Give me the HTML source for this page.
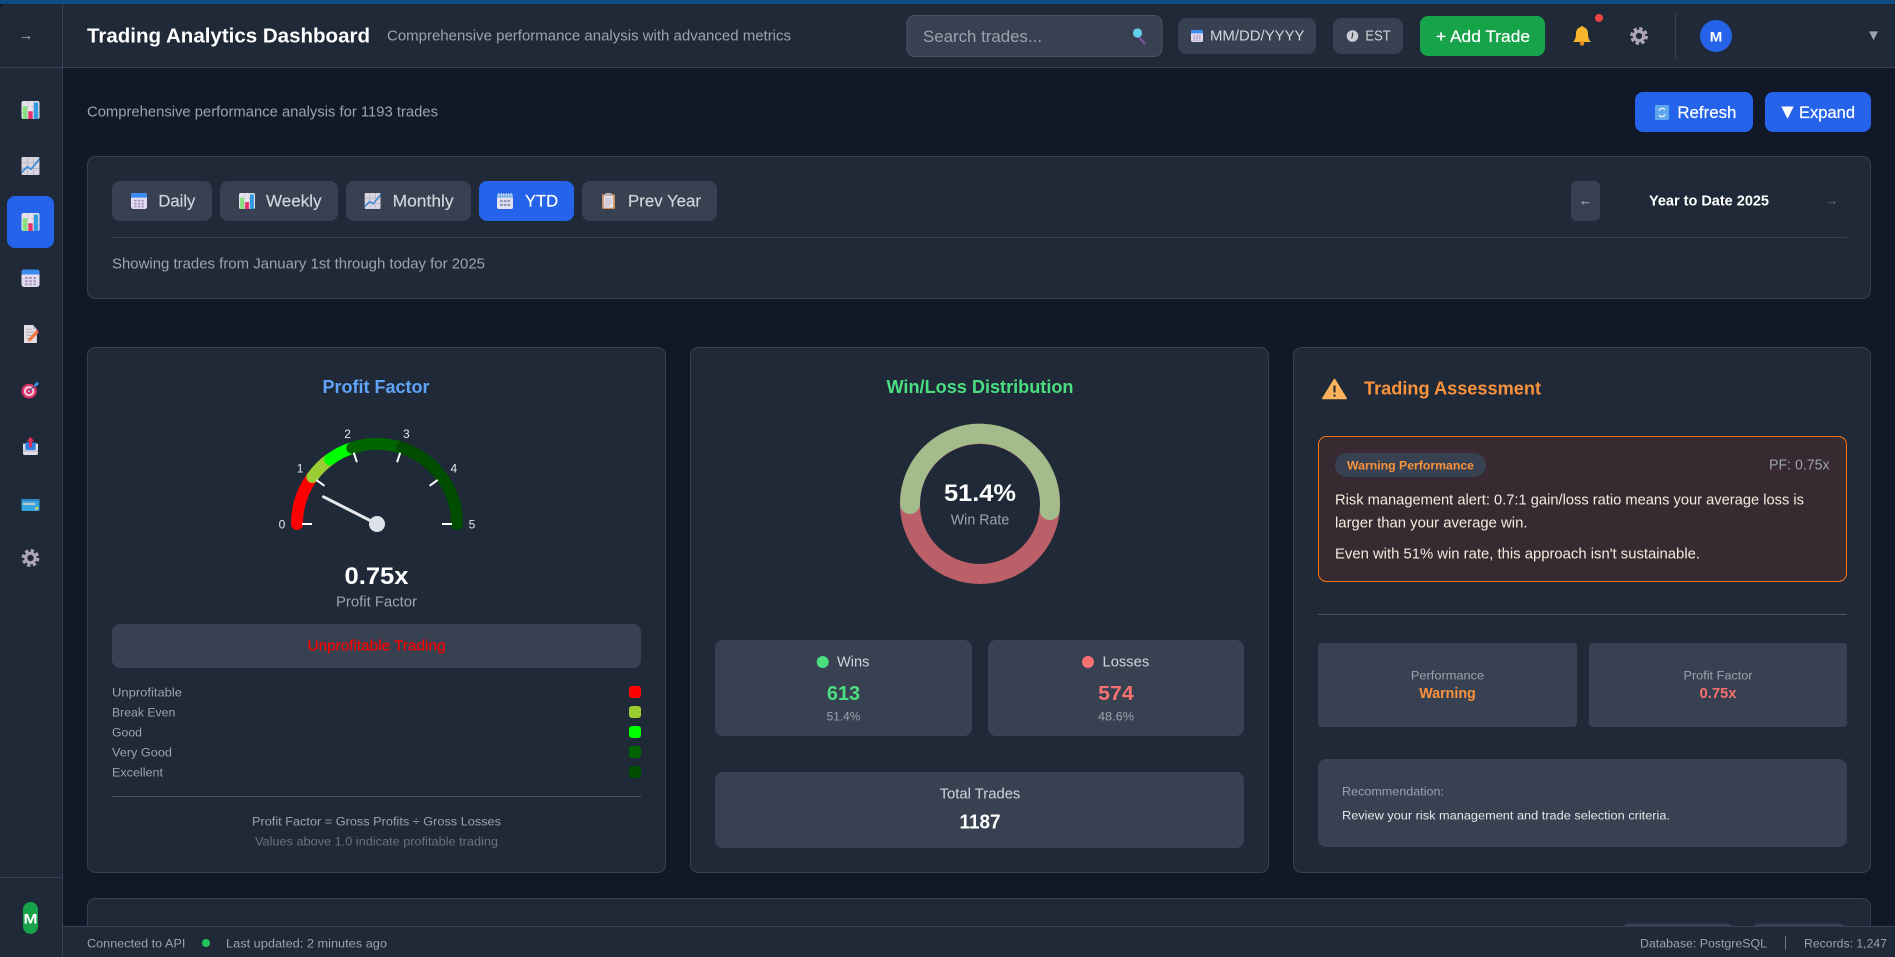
<!DOCTYPE html>
<html lang="en">
<head>
<meta charset="utf-8">
<title>Trading Analytics Dashboard</title>
<style>
html,body{margin:0;padding:0;width:1895px;height:957px;overflow:hidden;background:#111827}
svg{display:block}
text{font-family:"Liberation Sans",sans-serif;dominant-baseline:central;white-space:pre;transform:translateY(.5px)}
.b{font-weight:700}
.m{stroke:currentColor;stroke-width:.18px}
.w{fill:#fff;color:#fff}
.g3{fill:#d1d5db;color:#d1d5db}
.g4{fill:#9ca3af;color:#9ca3af}
.g5{fill:#6b7280}
.mid{text-anchor:middle}
.s12{font-size:12.3px}
.s14{font-size:14.4px}
.s16{font-size:16.4px}
.s18{font-size:18.4px}
.card{fill:#1f2937;stroke:#374151;stroke-width:1}
.btn{fill:#374151}
.blue{fill:#2563eb}
</style>
</head>
<body>
<svg xmlns="http://www.w3.org/2000/svg" width="1895" height="957" viewBox="0 0 1895 957">
<defs>
<symbol id="chart" viewBox="1 1 14 14" preserveAspectRatio="none"><rect x="1" y="1" width="14" height="14" rx="1.5" fill="#e6e2ea"/><path d="M1 5.5h14M1 10h14M5.6 1v14M10.4 1v14" stroke="#c9c4d2" stroke-width=".5"/><rect x="2" y="5" width="3.4" height="10" fill="#86e07e"/><rect x="6.3" y="9" width="3.4" height="6" fill="#e8326b"/><rect x="10.6" y="2.2" width="3.4" height="12.8" fill="#2f9ae0"/></symbol>
<symbol id="line" viewBox="1 1 14 14" preserveAspectRatio="none"><rect x="1" y="1" width="14" height="14" rx="1" fill="#d9d4df"/><path d="M1 5.5h14M1 10h14M5.6 1v14M10.4 1v14" stroke="#b8b2c2" stroke-width=".6"/><path d="M1 13 5.5 8.5 8.5 10.5 15 2.5" fill="none" stroke="#3f8ed8" stroke-width="1.4"/></symbol>
<symbol id="cal" viewBox="1.5 1 13 14" preserveAspectRatio="none"><rect x="1.5" y="1" width="13" height="14" rx="2" fill="#e4ddf0"/><path d="M1.5 5V3a2 2 0 0 1 2-2h9a2 2 0 0 1 2 2v2z" fill="#3b8cf0"/><path d="M4 7h2v1.6H4zM7 7h2v1.6H7zM10 7h2v1.6h-2zM4 9.6h2v1.6H4zM7 9.6h2v1.6H7zM10 9.6h2v1.6h-2zM4 12.2h2v1.4H4zM7 12.2h2v1.4H7zM10 12.2h2v1.4h-2z" fill="#a497bd"/></symbol>
<symbol id="cal2" viewBox="1.5 1 13 14" preserveAspectRatio="none"><rect x="1.5" y="2" width="13" height="13" rx="1.5" fill="#e4e2f0"/><rect x="1.5" y="2" width="13" height="3" fill="#6fa8e8"/><path d="M3 1v3M5 1v3M7 1v3M9 1v3M11 1v3M13 1v3" stroke="#dfe3ee" stroke-width=".8"/><path d="M4 7h2.2v2H4zM7 7h2.2v2H7zM10 7h2.2v2H10zM4 10.4h2.2v2H4zM7 10.4h2.2v2H7zM10 10.4h2.2v2H10z" fill="#8f97b8"/></symbol>
<symbol id="memo" viewBox="2 .5 14 15" preserveAspectRatio="none"><path d="M2 .5h8.5L14 4v11.5H2z" fill="#e4dfe6"/><path d="M10.5.5V4H14z" fill="#bfb8c6"/><path d="M4 4h5M4 6.5h7M4 9h5M4 11.5h3" stroke="#a9a2b2" stroke-width=".7"/><path d="M5.5 14.5l1-3 7-6.5 2 2-7 6.5z" fill="#f0793a"/><path d="M13.5 5l2 2 .5-.9-1.6-1.9z" fill="#e8326b"/></symbol>
<symbol id="target" viewBox=".4 0 15.6 16" preserveAspectRatio="none"><circle cx="7" cy="9" r="6.6" fill="#dc2f68"/><circle cx="7" cy="9" r="4.6" fill="#f0c8d6"/><circle cx="7" cy="9" r="2.7" fill="#dc2f68"/><circle cx="7" cy="9" r="1" fill="#f0c8d6"/><path d="M7 9 13 3" stroke="#3a5f8f" stroke-width="1"/><path d="M11.5 3 14 .3l.3 1.6 1.6.3-2.6 2.6-1.8-.2z" fill="#3b8ee0"/></symbol>
<symbol id="inbox" viewBox="1.5 .5 13 15" preserveAspectRatio="none"><path d="M1.5 6h13v8a1.5 1.5 0 0 1-1.5 1.5H3A1.5 1.5 0 0 1 1.5 14z" fill="#e2deea"/><rect x="3.5" y="5" width="9" height="6.5" rx=".5" fill="#2f80e0"/><path d="M1.5 11h4l1 1.6h3l1-1.6h4v2h-13z" fill="#c7c2d2"/><path d="M8 .5 11.3 4H9.3v5H6.7V4H4.7z" fill="#e02f5c"/></symbol>
<symbol id="cardi" viewBox=".5 1.5 19 13" preserveAspectRatio="none"><rect x=".5" y="1.5" width="19" height="13" rx="1.5" fill="#35a5e0"/><rect x=".5" y="1.5" width="19" height="2.4" fill="#2d87c7"/><rect x="2" y="5.5" width="13" height="2.6" fill="#bcc6d0"/><rect x="15" y="10.5" width="3" height="2.4" fill="#e8d84a"/></symbol>
<symbol id="gear" viewBox="0 0 16 16"><circle cx="8" cy="8" r="6.6" fill="none" stroke="#aca5ba" stroke-width="2.6" stroke-dasharray="3 2.18"/><circle cx="8" cy="8" r="4.2" fill="none" stroke="#aca5ba" stroke-width="2.8"/></symbol>
<symbol id="clip" viewBox="2.5 .5 11 15" preserveAspectRatio="none"><rect x="2.5" y="1.5" width="11" height="14" rx="1" fill="#cb8b5c"/><rect x="4" y="3" width="8" height="11.3" fill="#e6e2ea"/><rect x="5.5" y=".5" width="5" height="3" rx=".6" fill="#b9b4c0"/><path d="M5 6h6M5 8h6M5 10h6M5 12h4" stroke="#a9a2b2" stroke-width=".7"/></symbol>
</defs>

<rect width="1895" height="957" fill="#111827"/>
<rect width="1895" height="4" fill="#0e4c82"/>

<!-- bottom partial card -->
<rect class="card" x="87.5" y="898.5" width="1783" height="70" rx="8"/>
<rect x="1623" y="923.5" width="110" height="12" rx="6" fill="#374151"/>
<rect x="1752" y="923.5" width="93" height="12" rx="6" fill="#374151"/>

<!-- sidebar -->
<path d="M0 10a6 6 0 0 1 6-6h56v953H0z" fill="#1f2937"/>
<path d="M0 877.5h62" stroke="#374151"/>
<rect class="blue" x="7" y="196" width="47" height="52" rx="8"/>
<use href="#chart" x="21.5" y="101" width="18" height="18"/>
<use href="#line" x="21.5" y="157" width="18" height="18"/>
<use href="#chart" x="21.5" y="213" width="18" height="18"/>
<use href="#cal" x="21.5" y="269.5" width="18" height="17.5"/>
<use href="#memo" x="24" y="325" width="15" height="18"/>
<use href="#target" x="21.5" y="381" width="18" height="18"/>
<use href="#inbox" x="23" y="437" width="15" height="18"/>
<use href="#cardi" x="21.5" y="499" width="18" height="12"/>
<use href="#gear" x="21.5" y="549" width="18" height="18"/>
<rect x="23" y="902" width="15" height="32" rx="7.5" fill="#16a34a"/>
<text class="b w mid" x="30.5" y="918" font-size="14" textLength="14" lengthAdjust="spacingAndGlyphs">M</text>

<!-- header -->
<rect x="62" y="4" width="1833" height="63" fill="#1f2937"/>
<path d="M0 67.5h1895" stroke="#374151"/>
<path d="M62.5 4v953" stroke="#374151"/>
<text class="g4 mid" x="26" y="35" font-size="15">→</text>
<text class="b w" x="87" y="36" font-size="20.4" textLength="283" lengthAdjust="spacingAndGlyphs">Trading Analytics Dashboard</text>
<text class="g4 s14" x="387" y="36" textLength="404" lengthAdjust="spacingAndGlyphs">Comprehensive performance analysis with advanced metrics</text>

<rect x="907" y="15.5" width="255" height="41" rx="8" fill="#374151" stroke="#4b5563"/>
<text class="g4 s16" x="923" y="36.5" textLength="119" lengthAdjust="spacingAndGlyphs">Search trades...</text>
<path d="M1139 37l5.5 6.5" stroke="#7a4fa0" stroke-width="2.4" stroke-linecap="round"/>
<circle cx="1137.5" cy="33" r="4.6" fill="#62cfe8"/>

<rect class="btn" x="1178" y="18" width="138" height="36" rx="8"/>
<use href="#cal" x="1191" y="30" width="12" height="12"/>
<text class="g3 s14" x="1210" y="36" textLength="94.5" lengthAdjust="spacingAndGlyphs">MM/DD/YYYY</text>
<rect class="btn" x="1333" y="18" width="70" height="36" rx="8"/>
<circle cx="1352.5" cy="36" r="5.8" fill="#c9ccd4"/>
<path d="M1352.5 32.5v3.5l-1 2.4" stroke="#3a3f4a" stroke-width="1.2" fill="none"/>
<text class="g3 s14" x="1365.4" y="36" textLength="25.3" lengthAdjust="spacingAndGlyphs">EST</text>
<rect x="1420" y="16" width="125" height="40" rx="8" fill="#16a34a"/>
<text class="w m s16" x="1436" y="36.5" textLength="94" lengthAdjust="spacingAndGlyphs">+ Add Trade</text>

<path d="M1582 27c-4 0-6 3-6 6.4 0 3.6-.8 6.4-2.8 8.6h17.6c-2-2.2-2.8-5-2.8-8.6 0-3.4-2-6.4-6-6.4z" fill="#f7b62e"/>
<path d="M1580.5 27.5c0-2 3-2 3 0z" fill="#f7b62e"/>
<circle cx="1582" cy="43.4" r="2.2" fill="#e88f1e"/>
<circle cx="1599" cy="18" r="4" fill="#ef4444"/>
<use href="#gear" x="1630" y="27" width="18" height="18"/>
<path d="M1675.5 12v48" stroke="#374151"/>
<circle cx="1716" cy="36" r="16" fill="#2563eb"/>
<text class="b w mid" x="1716" y="36" font-size="14" textLength="12.5" lengthAdjust="spacingAndGlyphs">M</text>
<text class="g4 mid" x="1873.5" y="35" font-size="15">▼</text>

<!-- subheader -->
<text class="g4 s14" x="87" y="112" textLength="351" lengthAdjust="spacingAndGlyphs">Comprehensive performance analysis for 1193 trades</text>
<rect class="blue" x="1635" y="92" width="118" height="40" rx="8"/>
<rect x="1655" y="105" width="14" height="15" rx="1.5" fill="#5fa8ee"/>
<path d="M1659 110.5a3.4 3.4 0 0 1 6-.6M1665 114.5a3.4 3.4 0 0 1-6 .6" fill="none" stroke="#eef5fd" stroke-width="1.3"/>
<text class="w m s16" x="1677.4" y="112.5" textLength="59" lengthAdjust="spacingAndGlyphs">Refresh</text>
<rect class="blue" x="1765" y="92" width="106" height="40" rx="8"/>
<text class="w mid" x="1787.5" y="111.5" font-size="21">▼</text>
<text class="w m s16" x="1799" y="112.5" textLength="56" lengthAdjust="spacingAndGlyphs">Expand</text>

<!-- filter card -->
<rect class="card" x="87.5" y="156.5" width="1783" height="142" rx="8"/>
<rect class="btn" x="112" y="181" width="100" height="40" rx="8"/>
<use href="#cal" x="131" y="193" width="16" height="16"/>
<text class="g3 m s16" x="158.4" y="201" textLength="37" lengthAdjust="spacingAndGlyphs">Daily</text>
<rect class="btn" x="220" y="181" width="118" height="40" rx="8"/>
<use href="#chart" x="239" y="193" width="16" height="16"/>
<text class="g3 m s16" x="266" y="201" textLength="55.5" lengthAdjust="spacingAndGlyphs">Weekly</text>
<rect class="btn" x="346" y="181" width="125" height="40" rx="8"/>
<use href="#line" x="364.6" y="193" width="16" height="16"/>
<text class="g3 m s16" x="392.6" y="201" textLength="61" lengthAdjust="spacingAndGlyphs">Monthly</text>
<rect class="blue" x="479" y="181" width="95" height="40" rx="8"/>
<use href="#cal2" x="497" y="193" width="16" height="16"/>
<text class="w m s16" x="525" y="201" textLength="33" lengthAdjust="spacingAndGlyphs">YTD</text>
<rect class="btn" x="582" y="181" width="135" height="40" rx="8"/>
<use href="#clip" x="602" y="193" width="13" height="16"/>
<text class="g3 m s16" x="628" y="201" textLength="73" lengthAdjust="spacingAndGlyphs">Prev Year</text>

<rect class="btn" x="1571" y="181" width="29" height="40" rx="6"/>
<text class="g3 mid" x="1585.5" y="200" font-size="13">←</text>
<text class="b w s14" x="1649" y="201" textLength="120" lengthAdjust="spacingAndGlyphs">Year to Date 2025</text>
<text class="g5 mid" x="1832" y="200" font-size="13">→</text>
<path d="M112 237.5h1735" stroke="#374151"/>
<text class="g4 s14" x="112" y="264" textLength="373" lengthAdjust="spacingAndGlyphs">Showing trades from January 1st through today for 2025</text>

<!-- profit factor card -->
<rect class="card" x="87.5" y="347.5" width="578" height="525" rx="8"/>
<text class="b s18 mid" x="376" y="386" fill="#60a5fa" textLength="107" lengthAdjust="spacingAndGlyphs">Profit Factor</text>
<g fill="none" stroke-width="12" stroke-linecap="round">
<path d="M297 524A80 80 0 0 1 312.28 476.98" stroke="#ff0000"/>
<path d="M312.28 476.98A80 80 0 0 1 329.98 459.28" stroke="#9acd32"/>
<path d="M329.98 459.28A80 80 0 0 1 352.28 447.92" stroke="#00ff00"/>
<path d="M352.28 447.92A80 80 0 0 1 401.72 447.92" stroke="#006400"/>
<path d="M401.72 447.92A80 80 0 0 1 457 524" stroke="#004d00"/>
</g>
<path d="M312 524H302M324.4 485.8 316.3 479.9M356.9 462.2 353.8 452.7M397.1 462.2 400.2 452.7M429.6 485.8 437.7 479.9M442 524H452" stroke="#fff" stroke-width="2"/>
<g fill="#e5e7eb" font-size="12" text-anchor="middle">
<text x="282" y="524">0</text><text x="300.1" y="468">1</text><text x="347.6" y="433.5">2</text><text x="406.4" y="433.5">3</text><text x="453.9" y="468">4</text><text x="472" y="524">5</text>
</g>
<path d="M377 524 323.5 496.8" stroke="#e5e7eb" stroke-width="3" stroke-linecap="round"/>
<circle cx="377" cy="524" r="8" fill="#dde1ea"/>
<text class="b w mid" x="376.5" y="576" font-size="24.5" textLength="64" lengthAdjust="spacingAndGlyphs">0.75x</text>
<text class="g4 s14 mid" x="376.5" y="602" textLength="81" lengthAdjust="spacingAndGlyphs">Profit Factor</text>
<rect class="btn" x="112" y="624" width="529" height="44" rx="8"/>
<text class="m s14 mid" x="376.5" y="646" fill="#ff0000" color="#ff0000" textLength="138" lengthAdjust="spacingAndGlyphs">Unprofitable Trading</text>
<g class="g4 s12">
<text x="112" y="692" textLength="70" lengthAdjust="spacingAndGlyphs">Unprofitable</text>
<text x="112" y="712" textLength="63.3" lengthAdjust="spacingAndGlyphs">Break Even</text>
<text x="112" y="732" textLength="30" lengthAdjust="spacingAndGlyphs">Good</text>
<text x="112" y="752" textLength="60" lengthAdjust="spacingAndGlyphs">Very Good</text>
<text x="112" y="772" textLength="51" lengthAdjust="spacingAndGlyphs">Excellent</text>
</g>
<rect x="629" y="686" width="12" height="12" rx="3" fill="#ff0000"/>
<rect x="629" y="706" width="12" height="12" rx="3" fill="#9acd32"/>
<rect x="629" y="726" width="12" height="12" rx="3" fill="#00ff00"/>
<rect x="629" y="746" width="12" height="12" rx="3" fill="#006400"/>
<rect x="629" y="766" width="12" height="12" rx="3" fill="#004d00"/>
<path d="M112 796.5h529" stroke="#4b5563"/>
<text class="g4 s12 mid" x="376.5" y="821" textLength="249" lengthAdjust="spacingAndGlyphs">Profit Factor = Gross Profits ÷ Gross Losses</text>
<text class="g5 s12 mid" x="376.5" y="841" textLength="243" lengthAdjust="spacingAndGlyphs">Values above 1.0 indicate profitable trading</text>

<!-- win/loss card -->
<rect class="card" x="690.5" y="347.5" width="578" height="525" rx="8"/>
<text class="b s18 mid" x="980" y="386" fill="#4ade80" textLength="187" lengthAdjust="spacingAndGlyphs">Win/Loss Distribution</text>
<circle cx="980" cy="504" r="70" fill="none" stroke="#bb6069" stroke-width="20"/>
<path d="M910 504A70 70 0 1 1 1049.7 510.1" fill="none" stroke="#a4bb8b" stroke-width="20" stroke-linecap="round"/>
<text class="b w mid" x="980" y="493" font-size="24.5" textLength="72" lengthAdjust="spacingAndGlyphs">51.4%</text>
<text class="g4 s14 mid" x="980" y="520" textLength="58.5" lengthAdjust="spacingAndGlyphs">Win Rate</text>
<rect class="btn" x="715" y="640" width="257" height="96" rx="8"/>
<rect class="btn" x="988" y="640" width="256" height="96" rx="8"/>
<circle cx="822.7" cy="662" r="6" fill="#4ade80"/>
<text class="g3 s14" x="837" y="662" textLength="32.5" lengthAdjust="spacingAndGlyphs">Wins</text>
<text class="b mid" x="843.5" y="693.5" font-size="20.4" fill="#4ade80" textLength="33.3" lengthAdjust="spacingAndGlyphs">613</text>
<text class="g4 s12 mid" x="843.5" y="716" textLength="33.7" lengthAdjust="spacingAndGlyphs">51.4%</text>
<circle cx="1088" cy="662" r="6" fill="#f87171"/>
<text class="g3 s14" x="1102.5" y="662" textLength="46.7" lengthAdjust="spacingAndGlyphs">Losses</text>
<text class="b mid" x="1116" y="693.5" font-size="20.4" fill="#f87171" textLength="35.6" lengthAdjust="spacingAndGlyphs">574</text>
<text class="g4 s12 mid" x="1116" y="716" textLength="36" lengthAdjust="spacingAndGlyphs">48.6%</text>
<rect class="btn" x="715" y="772" width="529" height="76" rx="8"/>
<text class="g3 s14 mid" x="980" y="794" textLength="80.7" lengthAdjust="spacingAndGlyphs">Total Trades</text>
<text class="b w mid" x="980" y="822" font-size="20.4" textLength="41" lengthAdjust="spacingAndGlyphs">1187</text>

<!-- assessment card -->
<rect class="card" x="1293.5" y="347.5" width="577" height="525" rx="8"/>
<path d="M1334.5 379.5 1346.2 398.5H1322.8z" fill="#fdb35c" stroke="#fdb35c" stroke-width="1.6" stroke-linejoin="round"/>
<path d="M1334.5 385.5v7" stroke="#333" stroke-width="2.2"/>
<circle cx="1334.5" cy="395.6" r="1.2" fill="#333"/>
<text class="b s18" x="1364" y="387.6" fill="#fb923c" textLength="177" lengthAdjust="spacingAndGlyphs">Trading Assessment</text>
<rect x="1318.5" y="436.5" width="528" height="145" rx="8" fill="#372a31" stroke="#f97316"/>
<rect class="btn" x="1335" y="453" width="151" height="24" rx="12"/>
<text class="b s12" x="1347" y="465" fill="#fb923c" textLength="127" lengthAdjust="spacingAndGlyphs">Warning Performance</text>
<text class="g4 s14" x="1769" y="465" textLength="60.6" lengthAdjust="spacingAndGlyphs">PF: 0.75x</text>
<g class="s14" fill="#f5ebde">
<text x="1335" y="500" textLength="469" lengthAdjust="spacingAndGlyphs">Risk management alert: 0.7:1 gain/loss ratio means your average loss is</text>
<text x="1335" y="523" textLength="192.5" lengthAdjust="spacingAndGlyphs">larger than your average win.</text>
<text x="1335" y="554" textLength="365" lengthAdjust="spacingAndGlyphs">Even with 51% win rate, this approach isn't sustainable.</text>
</g>
<path d="M1318 614.5h529" stroke="#4b5563"/>
<rect class="btn" x="1318" y="643" width="259" height="84" rx="4"/>
<rect class="btn" x="1589" y="643" width="258" height="84" rx="4"/>
<text class="g4 s12 mid" x="1447.5" y="675" textLength="73.3" lengthAdjust="spacingAndGlyphs">Performance</text>
<text class="b s14 mid" x="1447.5" y="693.5" fill="#fb923c" textLength="56.5" lengthAdjust="spacingAndGlyphs">Warning</text>
<text class="g4 s12 mid" x="1718" y="675" textLength="69" lengthAdjust="spacingAndGlyphs">Profit Factor</text>
<text class="b s14 mid" x="1718" y="693.5" fill="#f87171" textLength="37" lengthAdjust="spacingAndGlyphs">0.75x</text>
<rect class="btn" x="1318" y="759" width="529" height="88" rx="8"/>
<text class="g4 s12" x="1342" y="791" textLength="102" lengthAdjust="spacingAndGlyphs">Recommendation:</text>
<text class="s12" x="1342" y="815" fill="#e5e7eb" textLength="328" lengthAdjust="spacingAndGlyphs">Review your risk management and trade selection criteria.</text>

<!-- status bar -->
<rect x="63" y="926" width="1832" height="31" fill="#1f2937"/>
<path d="M63 926.5h1832" stroke="#374151"/>
<text class="g4 s12" x="87" y="943" textLength="98.4" lengthAdjust="spacingAndGlyphs">Connected to API</text>
<circle cx="206" cy="943" r="4" fill="#22c55e"/>
<text class="g4 s12" x="226" y="943" textLength="161" lengthAdjust="spacingAndGlyphs">Last updated: 2 minutes ago</text>
<text class="g4 s12" x="1640" y="943" textLength="127" lengthAdjust="spacingAndGlyphs">Database: PostgreSQL</text>
<path d="M1785.5 936v14" stroke="#6b7280"/>
<text class="g4 s12" x="1804" y="943" textLength="83" lengthAdjust="spacingAndGlyphs">Records: 1,247</text>
</svg>
</body>
</html>
